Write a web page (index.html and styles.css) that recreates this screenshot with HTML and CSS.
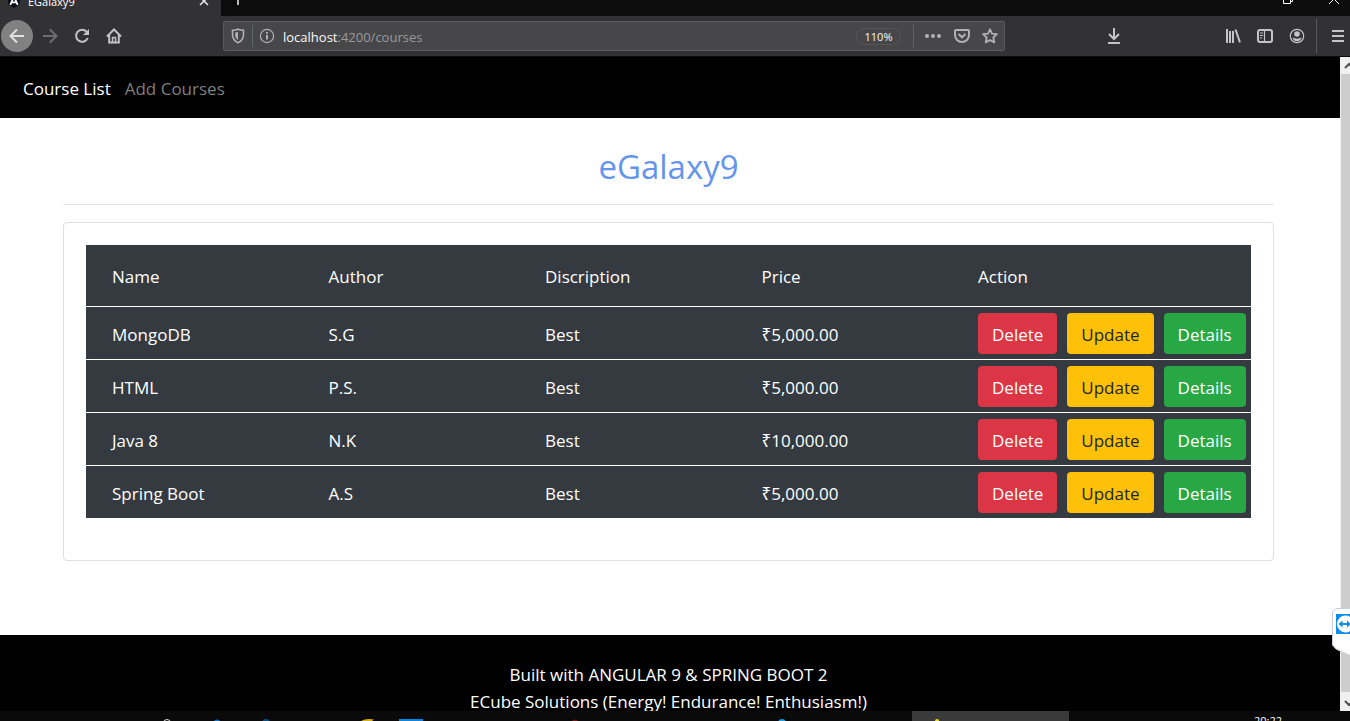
FILE: index.html
```html
<!DOCTYPE html>
<html lang="en">
<head>
<meta charset="utf-8">
<title>EGalaxy9</title>
<link rel="stylesheet" href="styles.css">
</head>
<body>
<div class="tabstrip">
  <div class="tab">
    <svg class="tab-logo" width="14" height="14" viewBox="0 0 14 14"><path d="M7 0l6.500 2.300-1 8.500L7 14l-5.500-3.200-1-8.500z" fill="#0b0d18"/><path d="M3.300 10.800L7 2.500l3.700 8.300M4.800 8.400h4.400" fill="none" stroke="#fff" stroke-width="1.800"/></svg>
    <span class="tab-title">EGalaxy9</span>
    <button class="tab-close" aria-label="Close tab"><svg width="10" height="10" viewBox="0 0 10 10"><path d="M1 1l8 8M9 1L1 9" stroke="#e4e4e6" stroke-width="1.600"/></svg></button>
  </div>
  <button class="tab-new" aria-label="New tab"><svg width="14" height="14" viewBox="0 0 14 14"><path d="M7 1v12M1 7h12" stroke="#b8b8ba" stroke-width="2"/></svg></button>
  <div class="window-buttons">
    <button aria-label="Restore"><svg width="12" height="12" viewBox="0 0 12 12" fill="none" stroke="#fff"><path d="M1.500 3.500h7v7h-7zM3.500 3V1.500h7v7H9"/></svg></button>
    <button aria-label="Close"><svg width="12" height="12" viewBox="0 0 12 12"><path d="M1 1l10 10M11 1L1 11" stroke="#fff"/></svg></button>
  </div>
</div>

<div class="toolbar">
  <button class="tool back" aria-label="Back"><svg width="16" height="16" viewBox="0 0 16 16"><path d="M15 8H1.500M8 1.500L1.500 8 8 14.500" /></svg></button>
  <button class="tool disabled" aria-label="Forward" disabled><svg width="16" height="16" viewBox="0 0 16 16"><path d="M1 8h13.500M8 1.500L14.500 8 8 14.500"/></svg></button>
  <button class="tool" aria-label="Reload"><svg width="16" height="16" viewBox="0 0 16 16"><path d="M12.600 3.800A6 6 0 1 0 13.700 10"/><path d="M15 1v6H9z" fill="#c4c4c5" stroke="none"/></svg></button>
  <button class="tool" aria-label="Home"><svg width="16" height="16" viewBox="0 0 16 16"><path d="M1 8.500L8 1.500l7 7M3.200 7v7.500h9.600V7"/><path d="M6.500 14V9.500h3V14" stroke-width="1.500"/></svg></button>
  <div class="urlbar">
    <svg class="icon" width="16" height="16" viewBox="0 0 16 16"><path d="M8 1.200c2 .8 3.800 1 5.500 1v4.300c0 4-2 6.500-5.500 8.300C4.500 13 2.500 10.500 2.500 6.500V2.200c1.700 0 3.500-.2 5.500-1z" stroke-width="1.600"/><path d="M8 4v8c-2-1.300-2.800-3-2.800-5.500V4.600C6.300 4.500 7 4.300 8 4z" fill="#b1b1b3" stroke="none"/></svg>
    <span class="divider"></span>
    <svg class="icon" width="16" height="16" viewBox="0 0 16 16"><circle cx="8" cy="8" r="6.600" stroke-width="1.200"/><path d="M8 7v4.500M8 4v1.800"/></svg>
    <div class="address" role="textbox" aria-label="Address" contenteditable="true" spellcheck="false"><b>localhost</b>:4200/courses</div>
    <button class="zoom">110%</button>
    <span class="divider"></span>
    <svg class="icon" width="18" height="16" viewBox="0 0 18 16"><g fill="#b1b1b3" stroke="none"><circle cx="3" cy="8" r="2"/><circle cx="9" cy="8" r="2"/><circle cx="15" cy="8" r="2"/></g></svg>
    <svg class="icon" width="16" height="16" viewBox="0 0 16 16"><path d="M2.200 2h11.600c.7 0 1.200.5 1.200 1.200V7A7 7 0 0 1 1 7V3.200C1 2.500 1.500 2 2.200 2zM4.500 6L8 9.300 11.500 6"/></svg>
    <svg class="icon" width="16" height="16" viewBox="0 0 16 16"><path d="M8 1.300l2 4.400 4.900.5-3.600 3.300 1 4.900L8 12l-4.300 2.400 1-4.900L1.100 6.200 6 5.700z" stroke-width="1.800" stroke-linejoin="round"/></svg>
  </div>
  <button class="tool download" aria-label="Downloads"><svg width="16" height="16" viewBox="0 0 16 16"><path d="M8 0v11M3 6l5 5 5-5M2 15h12"/></svg></button>
  <button class="tool" aria-label="Library"><svg width="16" height="16" viewBox="0 0 16 16"><path d="M2 1v14M5 3v12M8 3v12M10.500 1.500l4.500 13" stroke-width="2"/></svg></button>
  <button class="tool" aria-label="Sidebars"><svg width="16" height="16" viewBox="0 0 16 16"><rect x="1" y="2" width="14" height="12" rx="2"/><path d="M7.500 2v12M3 5h3M3 7.500h3M3 10h2" stroke-width="1.200"/></svg></button>
  <button class="tool" aria-label="Account"><svg width="16" height="16" viewBox="0 0 16 16"><circle cx="8" cy="8" r="6.700" stroke-width="1.200"/><circle cx="8" cy="6" r="2.800" fill="#c4c4c5" stroke="none"/><path d="M3.500 9.500c2.500 1.500 6.500 1.500 9 0-.5 2.200-2 3.700-4.500 3.700s-4-1.500-4.500-3.700z" fill="#c4c4c5" stroke="none"/></svg></button>
  <span class="tool-divider"></span>
  <button class="tool menu" aria-label="Menu"><svg width="12" height="16" viewBox="0 0 12 16"><path d="M0 3h12M0 8h12M0 13h12"/></svg></button>
</div>

<div class="viewport">
  <div class="page">
    <nav class="navbar">
      <a class="nav-link active" href="#">Course List</a>
      <a class="nav-link" href="#">Add Courses</a>
    </nav>
    <main class="content">
      <h1>eGalaxy9</h1>
      <section class="card">
        <table class="courses">
          <thead>
            <tr><th>Name</th><th>Author</th><th>Discription</th><th>Price</th><th class="action">Action</th></tr>
          </thead>
          <tbody>
            <tr><td>MongoDB</td><td>S.G</td><td>Best</td><td>₹5,000.00</td><td><div class="actions"><button class="btn delete">Delete</button><button class="btn update">Update</button><button class="btn details">Details</button></div></td></tr>
            <tr><td>HTML</td><td>P.S.</td><td>Best</td><td>₹5,000.00</td><td><div class="actions"><button class="btn delete">Delete</button><button class="btn update">Update</button><button class="btn details">Details</button></div></td></tr>
            <tr><td>Java 8</td><td>N.K</td><td>Best</td><td>₹10,000.00</td><td><div class="actions"><button class="btn delete">Delete</button><button class="btn update">Update</button><button class="btn details">Details</button></div></td></tr>
            <tr><td>Spring Boot</td><td>A.S</td><td>Best</td><td>₹5,000.00</td><td><div class="actions"><button class="btn delete">Delete</button><button class="btn update">Update</button><button class="btn details">Details</button></div></td></tr>
          </tbody>
        </table>
      </section>
    </main>
    <footer class="footer">
      <p>Built with ANGULAR 9 &amp; SPRING BOOT 2</p>
      <p>ECube Solutions (Energy! Endurance! Enthusiasm!)</p>
    </footer>
  </div>
  <div class="scrollbar">
    <svg width="9" height="17" viewBox="0 0 9 17"><path d="M4 11l4-4 4 4" fill="none" stroke="#505050" stroke-width="2"/></svg>
    <div class="thumb"></div>
    <svg width="9" height="19" viewBox="0 0 9 19"><path d="M4 9l4 4 4-4" fill="none" stroke="#505050" stroke-width="2"/></svg>
  </div>
  <svg class="remote-badge" width="18" height="48" viewBox="0 0 18 48"><path d="M19 .5H4L.5 4v33L4 41l15 7" fill="#fff" stroke="#c9ced6"/><path d="M4 6h14v20H4z" fill="#0e8ee9"/><circle cx="13.500" cy="16" r="8.500" fill="#fff"/><path d="M6.500 16l4-3.500v2.500h4.500v-2.500l4 3.500-4 3.500v-2.500h-4.500v2.500z" fill="#0e8ee9"/></svg>
</div>

<div class="taskbar">
  <div class="task-icons">
    <svg width="912" height="10" viewBox="0 0 912 10"><circle cx="167" cy="12" r="3.500" fill="none" stroke="#ddd"/><circle cx="217" cy="12" r="3.500" fill="#0a72c4"/><circle cx="266" cy="12" r="4" fill="#0b4d80"/><path d="M361 10q5-3 13-1.500L372 10z" fill="#d8b312"/><path d="M399 8h24v2h-24z" fill="#0b85e0"/><circle cx="575" cy="12" r="3.500" fill="#701818"/><circle cx="782" cy="12" r="4" fill="#1ba0e8"/></svg>
  </div>
  <div class="task-active"><svg width="10" height="10" viewBox="0 0 10 10"><circle cx="5" cy="10" r="2" fill="#f2e21c"/></svg></div>
  <time class="clock">20:22</time>
</div>
</body>
</html>
```
FILE: styles.css
```css
* { box-sizing: border-box; }

body {
  margin: 0;
  height: 100vh;
  display: flex;
  flex-direction: column;
  overflow: hidden;
  background: #fff;
  color: #fff;
  font-family: "Open Sans", "Noto Sans", sans-serif;
  font-size: 17px;
  line-height: 27px;
}

button {
  border: 0;
  padding: 0;
  background: none;
  color: inherit;
  font: inherit;
}

svg { display: block; flex: none; }

/* Browser frame */
.tabstrip {
  flex: none;
  height: 16px;
  display: flex;
  align-items: flex-end;
  overflow: hidden;
  background: #0c0c0d;
}

.tab {
  flex: none;
  width: 221px;
  height: 30px;
  padding: 0 12px 0 7px;
  display: flex;
  align-items: center;
  gap: 7px;
  background: #323234;
}

.tab-title { flex: 1; font-size: 11px; }
.tab-new { height: 34px; padding-left: 10px; }

.window-buttons {
  margin-left: auto;
  height: 34px;
  padding-right: 10px;
  display: flex;
  align-items: center;
  gap: 34px;
}

.toolbar {
  flex: none;
  height: 41px;
  padding-left: 1px;
  display: flex;
  align-items: center;
  background: #323234;
  border-bottom: 1px solid #0c0c0d;
}

.tool {
  flex: none;
  width: 32px;
  height: 32px;
  display: flex;
  align-items: center;
  justify-content: center;
}

.tool svg { fill: none; stroke: #c4c4c5; stroke-width: 2; }
.back { margin-right: 1px; border-radius: 50%; background: #818182; }
.back svg { stroke: #e0e0e0; }
.disabled svg { stroke: #6f6f70; }
.download { margin: 0 87px 0 93px; }
.menu { width: 24px; }

.tool-divider {
  width: 1px;
  height: 34px;
  margin: 0 9px 0 3px;
  background: #5a5a5c;
}

.urlbar {
  flex: 1;
  min-width: 0;
  height: 30px;
  margin-left: 93px;
  padding: 0 6px;
  display: flex;
  align-items: center;
  gap: 6px;
  background: #474749;
  border: 1px solid #5b5b5d;
  border-radius: 2px;
}

.icon { fill: none; stroke: #b1b1b3; stroke-width: 2; }
.icon + .icon { margin-left: 6px; }
.divider { width: 1px; height: 22px; background: #5f6468; }

.address {
  flex: 1;
  min-width: 0;
  padding: 2px 0 0 2px;
  color: #9a9a9c;
  font-size: 13px;
  line-height: 20px;
}

.address b { color: #f9f9fa; font-weight: 400; }

.zoom {
  width: 45px;
  height: 17px;
  margin-right: 6px;
  border: 1px solid #565658;
  border-radius: 9px;
  color: #f9f9fa;
  font-size: 11px;
  line-height: 15px;
}

.zoom + .divider { margin-right: 4px; }

/* Web page */
.viewport {
  position: relative;
  flex: 1;
  min-height: 0;
  display: flex;
}

.page {
  flex: 1;
  display: flex;
  flex-direction: column;
  overflow: hidden;
}

.navbar {
  flex: none;
  padding: 18px 23px 16px;
  display: flex;
  gap: 14px;
  background: #000;
}

.nav-link { color: #7f7f7f; text-decoration: none; }
.nav-link.active { color: #fff; }

.content { flex: 1; padding: 0 66px 0 63px; }

h1 {
  margin: 0 0 17px;
  padding: 27px 0 15px;
  border-bottom: 1px solid #e5e5e5;
  color: #6495ed;
  font-size: 33px;
  font-weight: 400;
  line-height: 44px;
  text-align: center;
}

.card {
  padding: 22px 22px 42px;
  border: 1px solid #dfdfdf;
  border-radius: 4px;
}

.courses {
  width: 100%;
  table-layout: fixed;
  border-collapse: collapse;
  background: #343a40;
}

th, td {
  padding: 0 0 0 26px;
  font-weight: 400;
  text-align: left;
}

th { height: 61px; padding-top: 3px; }
td { height: 53px; padding-top: 3px; border-top: 1px solid #fff; }
td:last-child { padding-top: 2px; }
.action { width: 299px; }
.actions { display: flex; gap: 10px; }

.btn {
  padding: 8px 14px 6px;
  border-radius: 4px;
}

.delete { background: #dc3545; }
.update { background: #ffc107; color: #212529; }
.details { background: #28a745; }

.footer {
  flex: none;
  height: 76px;
  padding: 26px 3px 0 0;
  background: #000;
  text-align: center;
}

.footer p { margin: 0; }

.scrollbar {
  flex: none;
  width: 10px;
  padding-left: 1px;
  display: flex;
  flex-direction: column;
  background: #f0f0f0;
}

.thumb { flex: 1; background: #cdcdcd; }
.remote-badge { position: absolute; right: 0; bottom: 55px; }

/* Desktop taskbar */
.taskbar {
  flex: none;
  height: 10px;
  display: flex;
  overflow: hidden;
  background: #0a0a0a;
}

.task-active { width: 157px; padding-left: 20px; background: #3a3a3a; }

.clock {
  margin: 3px 68px 0 auto;
  font-size: 11px;
  line-height: 14px;
}
```
